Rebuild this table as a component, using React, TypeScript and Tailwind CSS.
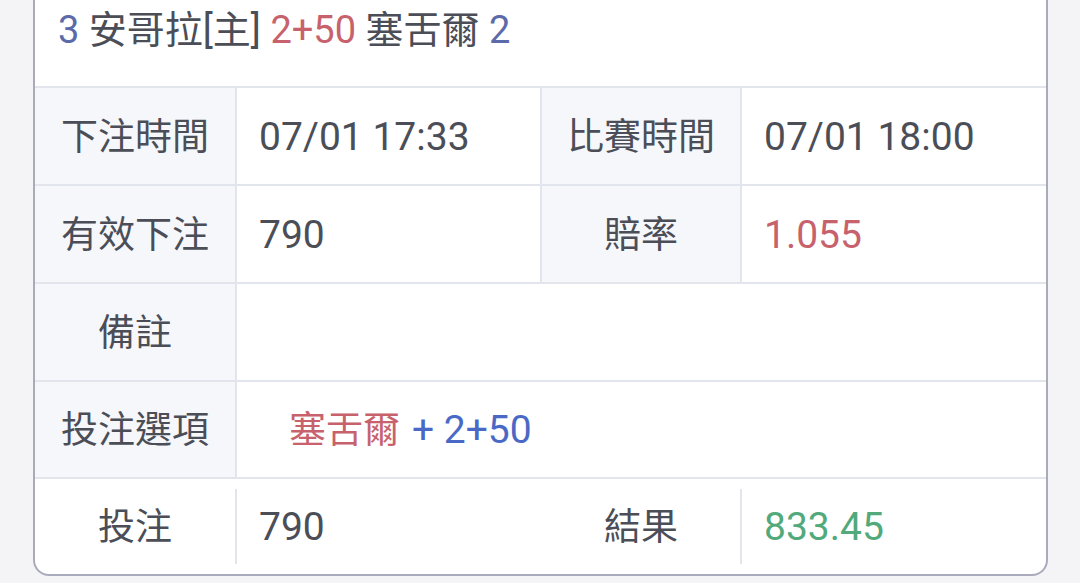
import React from "react";

const font = { fontFamily: "Roboto, 'Noto Sans CJK TC', sans-serif" };

function Label({ children, shaded = true }: { children: React.ReactNode; shaded?: boolean }) {
  return (
    <div
      className={`flex items-center justify-center pt-[2px] text-[37px] ${shaded ? "bg-[#f6f7fb]" : ""}`}
    >
      {children}
    </div>
  );
}

function Value({ children, className = "" }: { children?: React.ReactNode; className?: string }) {
  return <div className={`flex items-center pl-[22px] pt-[2px] text-[39px] ${className}`}>{children}</div>;
}

export default function App() {
  return (
    <main className="h-[583px] overflow-hidden bg-[#f4f4f7]" style={font}>
      <div className="ml-[33px] w-[1015px] border-2 border-t-0 border-[#a9abbd] rounded-b-[16px] bg-white text-[#4b4e57] leading-none">
        {/* Header */}
        <div className="h-[86px] pl-[23px] pt-[11px] text-[38px]">
          <span className="text-[#5b6aa8]">3</span> 安哥拉[主]{" "}
          <span className="text-[#c7626d]">2+50</span> 塞舌爾{" "}
          <span className="text-[#5b6aa8]">2</span>
        </div>

        {/* Table */}
        <div className="grid h-[98px] grid-cols-[200px_2px_303px_2px_198px_2px_1fr] border-t-2 border-[#e3e5ec]">
          <Label>下注時間</Label>
          <div className="bg-[#e3e5ec]" />
          <Value>07/01 17:33</Value>
          <div className="bg-[#e3e5ec]" />
          <Label>比賽時間</Label>
          <div className="bg-[#e3e5ec]" />
          <Value>07/01 18:00</Value>
        </div>
        <div className="grid h-[98px] grid-cols-[200px_2px_303px_2px_198px_2px_1fr] border-t-2 border-[#e3e5ec]">
          <Label>有效下注</Label>
          <div className="bg-[#e3e5ec]" />
          <Value>790</Value>
          <div className="bg-[#e3e5ec]" />
          <Label>賠率</Label>
          <div className="bg-[#e3e5ec]" />
          <Value className="text-[#c7626d]">1.055</Value>
        </div>
        <div className="grid h-[98px] grid-cols-[200px_2px_1fr] border-t-2 border-[#e3e5ec]">
          <Label>備註</Label>
          <div className="bg-[#e3e5ec]" />
          <Value />
        </div>
        <div className="grid h-[97px] grid-cols-[200px_2px_1fr] border-t-2 border-[#e3e5ec]">
          <Label>投注選項</Label>
          <div className="bg-[#e3e5ec]" />
          <Value className="pl-[52px]">
            <span className="text-[#c7626d] text-[37px]">塞舌爾</span>
            <span className="ml-[12px] text-[#4a69c6]">+ 2+50</span>
          </Value>
        </div>
        <div className="grid h-[97px] grid-cols-[200px_2px_303px_2px_198px_2px_1fr] border-t-2 border-[#e3e5ec]">
          <Label shaded={false}>投注</Label>
          <div className="my-[10px] bg-[#e3e5ec]" />
          <Value>790</Value>
          <div />
          <Label shaded={false}>結果</Label>
          <div className="my-[10px] bg-[#e3e5ec]" />
          <Value className="text-[#52a97b]">833.45</Value>
        </div>
      </div>
    </main>
  );
}
